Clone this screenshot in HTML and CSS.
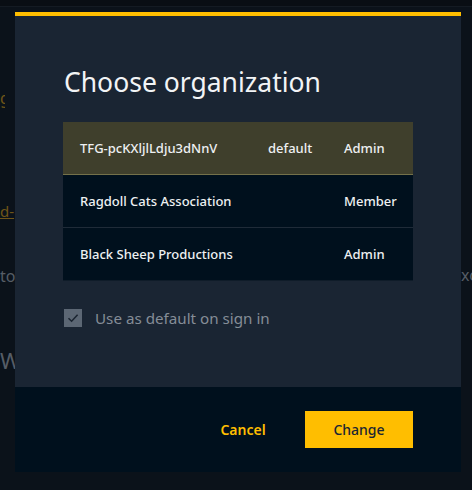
FILE: index.html
```html
<!DOCTYPE html>
<html lang="en">
<head>
<meta charset="utf-8">
<title>Choose organization</title>
<link rel="stylesheet" href="styles.css">
</head>
<body>
<div class="page">
  <div class="topbar"></div>
  <div class="bg-body">
    <div class="bg-left">
      <div class="frag frag-g"><span>g</span></div>
      <div class="frag frag-link"><span>d-</span></div>
      <div class="frag frag-top"><span>top</span></div>
      <div class="frag frag-w"><span>W</span></div>
    </div>
    <div class="bg-right">
      <div class="frag frag-xc"><span>xc</span></div>
    </div>
  </div>
</div>

<div class="overlay">
  <div class="modal" role="dialog" aria-labelledby="modal-title">
    <div class="modal-body">
      <h1 id="modal-title" class="modal-title">Choose organization</h1>
      <div class="org-table">
        <div class="org-row selected">
          <div class="cell name">TFG-pcKXljlLdju3dNnV</div>
          <div class="cell tag">default</div>
          <div class="cell role">Admin</div>
        </div>
        <div class="org-row">
          <div class="cell name">Ragdoll Cats Association</div>
          <div class="cell tag"></div>
          <div class="cell role">Member</div>
        </div>
        <div class="org-row">
          <div class="cell name">Black Sheep Productions</div>
          <div class="cell tag"></div>
          <div class="cell role">Admin</div>
        </div>
      </div>
      <label class="check">
        <span class="box">
          <svg width="14" height="14" viewBox="0 0 14 14"><path d="M2.5 7.2 L5.6 10.2 L11.6 3.8" fill="none" stroke="#1b2531" stroke-width="1.6"/></svg>
        </span>
        <span class="check-label">Use as default on sign in</span>
      </label>
    </div>
    <div class="modal-footer">
      <button class="btn btn-ghost">Cancel</button>
      <button class="btn btn-primary">Change</button>
    </div>
  </div>
</div>
</body>
</html>
```

FILE: styles.css
```css
* { box-sizing: border-box; }
html, body { margin: 0; padding: 0; }
body {
  width: 472px;
  height: 490px;
  overflow: hidden;
  background: #0b121a;
  font-family: "Noto Sans", "Open Sans", sans-serif;
}

/* background page (dimmed) */
.page { height: 490px; display: flex; flex-direction: column; }
.topbar { height: 7px; background: #090e14; border-bottom: 1px solid #141b23; }
.bg-body { flex: 1; display: flex; justify-content: space-between; }
.bg-left { width: 15px; display: flex; flex-direction: column; }
.bg-right { width: 11px; display: flex; flex-direction: column; }
.frag { display: flex; overflow: hidden; white-space: nowrap; }
.frag-g { width: 5px; margin-top: 80px; color: #6f5518; font-size: 16px; }
.frag-link { margin-top: 92px; color: #6f5518; font-size: 15px; text-decoration: underline; }
.frag-top { margin-top: 44px; color: #565d66; font-size: 16px; }
.frag-w { margin-top: 58px; color: #565d66; font-size: 22px; }
.frag-xc { margin-top: 257px; color: #565d66; font-size: 16px; }

/* modal */
.overlay {
  position: fixed;
  inset: 0;
  display: flex;
  justify-content: flex-start;
  align-items: flex-start;
  padding: 12px 0 0 15px;
}
.modal {
  width: 446px;
  border-top: 4px solid #ffbe00;
  background: #1a2533;
  display: flex;
  flex-direction: column;
}
.modal-body { padding: 48px 48px 0 48px; height: 371px; }
.modal-title {
  margin: 0 0 22px 1px;
  font-size: 26.5px;
  line-height: 36px;
  font-weight: 400;
  color: #f2f4f6;
}
.org-table { display: flex; flex-direction: column; }
.org-row {
  display: grid;
  grid-template-columns: 189px 76px 85px;
  height: 53px;
  align-items: center;
  background: #00101d;
  border-bottom: 1px solid #1f2b38;
  font-size: 13px;
  font-weight: 500;
  color: #eef0f2;
}
.org-row:last-child { border-bottom-color: #0f1c29; }
.org-row.selected { background: #3f3f2c; border-bottom-color: #74714a; }
.cell.name { padding-left: 17px; }
.cell.tag { padding-left: 16px; }
.cell.role { padding-left: 16px; }

.check { display: flex; align-items: center; gap: 13px; margin-top: 27px; margin-left: 1px; }
.box {
  width: 18px; height: 18px;
  background: #5c6774;
  display: flex; align-items: center; justify-content: center;
}
.check-label { font-size: 15.2px; color: #858d97; }

.modal-footer {
  height: 85px;
  background: #00101d;
  display: flex;
  justify-content: flex-end;
  align-items: flex-start;
  gap: 8px;
  padding: 24px 48px 0 0;
}
.btn {
  width: 108px; height: 37px;
  border: 0;
  font-family: inherit;
  font-size: 14px;
  font-weight: 600;
  cursor: pointer;
}
.btn-ghost { background: transparent; color: #ffbe00; }
.btn-primary { background: #ffbe00; color: #1a2533; font-weight: 500; }
```
